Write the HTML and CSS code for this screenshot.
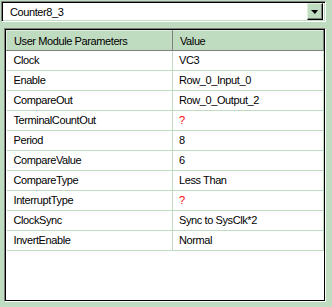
FILE: index.html
```html
<!DOCTYPE html>
<html lang="en">

<head>
    <meta charset="UTF-8">
    <title>User Module Parameters</title>
    <link rel="stylesheet" href="styles.css">
</head>

<body>
    <!-- Seletor do módulo -->
    <div class="combo">
        <span class="combo-text">Counter8_3</span>
        <span class="combo-button"><span class="arrow"></span></span>
    </div>

    <!-- Grade de parâmetros -->
    <div class="grid-frame">
        <table class="params">
            <thead>
                <tr>
                    <th class="col-name">User Module Parameters</th>
                    <th class="col-value">Value</th>
                </tr>
            </thead>
            <tbody>
                <tr><td>Clock</td><td>VC3</td></tr>
                <tr><td>Enable</td><td>Row_0_Input_0</td></tr>
                <tr><td>CompareOut</td><td>Row_0_Output_2</td></tr>
                <tr><td>TerminalCountOut</td><td class="unset">?</td></tr>
                <tr><td>Period</td><td>8</td></tr>
                <tr><td>CompareValue</td><td>6</td></tr>
                <tr><td>CompareType</td><td>Less Than</td></tr>
                <tr><td>InterruptType</td><td class="unset">?</td></tr>
                <tr><td>ClockSync</td><td>Sync to SysClk*2</td></tr>
                <tr><td>InvertEnable</td><td>Normal</td></tr>
            </tbody>
        </table>
    </div>
</body>

</html>
```

FILE: styles.css
```css
/* Estilos Gerais */
body,
html {
    margin: 0;
    padding: 0;
    background: #c0dcc0;
    font-family: 'Liberation Sans', Arial, sans-serif;
    font-size: 11px;
    letter-spacing: -0.4px;
    color: #000;
}

/* Caixa de seleção */
.combo {
    display: flex;
    align-items: center;
    box-sizing: border-box;
    width: 325px;
    height: 21px;
    margin: 1px 0 0 1px;
    background: #fff;
    border-top: 1px solid #808080;
    border-left: 1px solid #808080;
    border-right: 1px solid #fff;
    border-bottom: 1px solid #fff;
    box-shadow: inset 1px 1px 0 #000, inset -1px -1px 0 #c0dcc0;
}

.combo-text {
    flex: 1;
    padding-left: 8px;
}

.combo-button {
    display: flex;
    align-items: center;
    justify-content: center;
    box-sizing: border-box;
    width: 16px;
    height: 17px;
    margin-right: 2px;
    background: #c0dcc0;
    border-top: 1px solid #e0f0e0;
    border-left: 1px solid #e0f0e0;
    border-right: 1px solid #000;
    border-bottom: 1px solid #000;
    box-shadow: inset -1px -1px 0 #808080;
}

.arrow {
    width: 0;
    height: 0;
    border-left: 4px solid transparent;
    border-right: 3px solid transparent;
    border-top: 4px solid #000;
    margin: 1px 1px 0 0;
}

/* Moldura da grade */
.grid-frame {
    box-sizing: border-box;
    width: 322px;
    height: 274px;
    margin: 6px 0 0 4px;
    background: #fff;
    border-top: 1px solid #808080;
    border-left: 1px solid #808080;
    border-right: 1px solid #fff;
    border-bottom: 1px solid #fff;
    box-shadow: inset 1px 1px 0 #000, inset -1px -1px 0 #000;
    padding: 1px 1px 0 1px;
}

.params {
    border-collapse: collapse;
    width: 318px;
    table-layout: fixed;
}

.params th {
    height: 20px;
    box-sizing: border-box;
    padding: 0 0 0 7px;
    text-align: left;
    font-weight: normal;
    background: #c0dcc0;
    border-top: 1px solid #e0f0e0;
    border-left: 1px solid #e0f0e0;
    border-right: 1px solid #808080;
    border-bottom: 1px solid #808080;
}

.params .col-name {
    width: 166px;
}

.params td {
    height: 20px;
    box-sizing: border-box;
    padding: 0 0 1px 6px;
    border-bottom: 1px solid #c0dcc0;
    border-right: 1px solid #c0dcc0;
    white-space: nowrap;
}

.params td:first-child {
    padding-left: 7px;
}

.params .unset {
    color: #ff0000;
}
```
